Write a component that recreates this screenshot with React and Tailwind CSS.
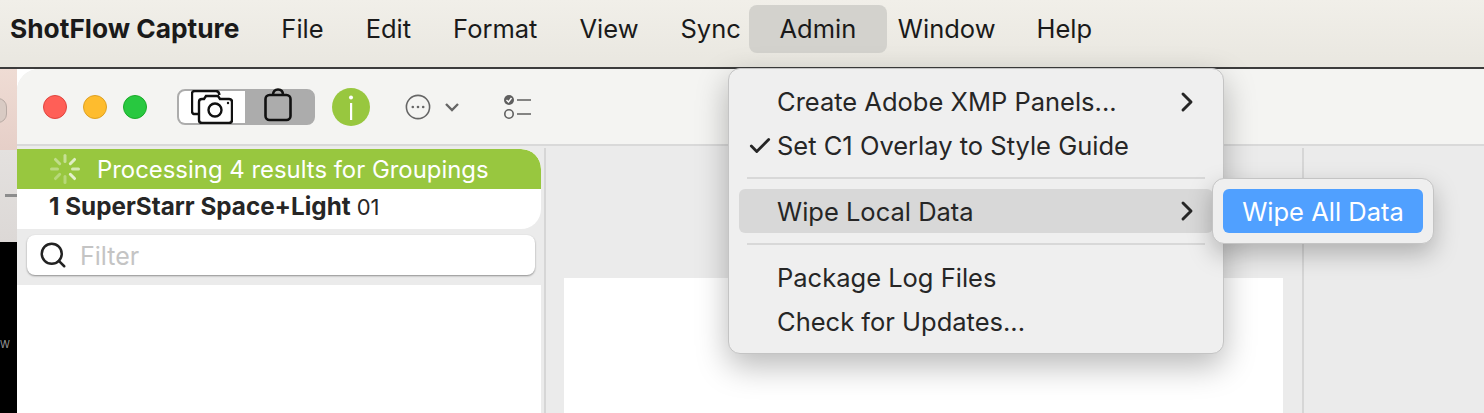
import React from 'react';
import { ChevronRight, Check, Search } from 'lucide-react';

const font = { fontFamily: 'Inter' };

function CameraIcon() {
  return (
    <svg width="42" height="34" viewBox="0 0 42 34" fill="none" stroke="#111" strokeWidth="2.4" className="absolute left-[12px] top-[-1px]">
      <path d="M7 24 H4 C2 24 1 23 1 21 V4 C1 2 2 1 4 1 H25 C27 1 28 2 28.5 5" />
      <path d="M8 12 C8 10 9 9 11 9 H13 L15 6 H27 L29 9 H38 C40 9 41 10 41 12 V30 C41 32 40 33 38 33 H11 C9 33 8 32 8 30 Z" />
      <circle cx="24" cy="20" r="6.5" />
      <circle cx="37" cy="13" r="1.2" fill="#111" stroke="none" />
    </svg>
  );
}

function BagIcon() {
  return (
    <svg width="28" height="34" viewBox="0 0 28 34" fill="none" stroke="#111" strokeWidth="2.6">
      <rect x="1.5" y="7" width="25" height="25" rx="4" />
      <path d="M9 7 C9 3.5 11 1.5 14 1.5 C17 1.5 19 3.5 19 7" />
    </svg>
  );
}

function InfoIcon() {
  return (
    <svg width="38" height="38" viewBox="0 0 38 38">
      <circle cx="19" cy="19" r="19" fill="#98c73f" />
      <circle cx="19" cy="9.5" r="2" fill="#fff" />
      <rect x="18" y="15" width="2.2" height="17" fill="#fff" />
    </svg>
  );
}

function Spinner() {
  const spokes = [
    [0, 0.45], [45, 0.7], [90, 0.6], [135, 0.75], [180, 0.3], [225, 0.3], [270, 0.35], [315, 0.4],
  ];
  return (
    <svg width="32" height="32" viewBox="0 0 32 32">
      {spokes.map(([deg, o]) => (
        <rect key={deg} x="14.5" y="1" width="3" height="9" rx="1.5" fill="#fff" opacity={o} transform={`rotate(${deg} 16 16)`} />
      ))}
    </svg>
  );
}

function TaskIcon() {
  return (
    <svg width="30" height="24" viewBox="0 0 30 24" fill="none">
      <circle cx="6" cy="5" r="5" fill="#5f5f5f" />
      <path d="M3.5 5 L5.5 7 L8.5 3" stroke="#fff" strokeWidth="1.4" />
      <circle cx="6" cy="19" r="4.2" stroke="#5f5f5f" strokeWidth="1.6" />
      <path d="M14 5 H28 M14 19 H28" stroke="#5f5f5f" strokeWidth="1.6" />
    </svg>
  );
}

function MoreIcon() {
  return (
    <svg width="26" height="26" viewBox="0 0 26 26" fill="none">
      <circle cx="13" cy="13" r="11.6" stroke="#666" strokeWidth="1.6" />
      <circle cx="7.8" cy="13" r="1.3" fill="#666" />
      <circle cx="13" cy="13" r="1.3" fill="#666" />
      <circle cx="18.2" cy="13" r="1.3" fill="#666" />
    </svg>
  );
}

function MenuItem({ children, checked, arrow, active }) {
  return (
    <div className={`flex h-11 items-center rounded-md pl-[38px] pr-[10px] text-[25.5px] text-[#262626] ${active ? 'bg-[#d8d8d8]' : ''}`}>
      <span className={`relative flex-1 leading-none ${active ? 'pt-[2px]' : ''}`}>
        {checked && <Check size={26} strokeWidth={2.6} className="absolute left-[-30px] top-0 text-[#262626]" />}
        {children}
      </span>
      {arrow && <ChevronRight size={32} strokeWidth={2.2} className="text-[#262626]" />}
    </div>
  );
}

export default function App() {
  const menus = ['File', 'Edit', 'Format', 'View', 'Sync'];

  return (
    <div className="relative flex h-[413px] w-[1484px] flex-col overflow-hidden bg-white" style={font}>
      {/* Menu bar */}
      <div className="flex h-[69px] shrink-0 items-start border-b-2 border-[#3c3c3c] bg-gradient-to-b from-[#f1efe9] to-[#e9e7e0] pl-[10px] pt-[5px] text-[25.5px] text-[#1a1a1a]">
        <span className="mr-[42px] flex h-12 items-center text-[26.3px] font-bold">ShotFlow Capture</span>
        {menus.map((m) => (
          <span key={m} className={`flex h-12 items-center ${m === 'Sync' ? 'mr-[8px]' : 'mr-[42px]'}`}>{m}</span>
        ))}
        <span className="flex h-12 w-[138px] items-center justify-center rounded-lg bg-[#d3d2cd]">Admin</span>
        <span className="ml-[11px] flex h-12 items-center">Window</span>
        <span className="ml-[41px] flex h-12 items-center">Help</span>
      </div>

      <div className="flex min-h-0 flex-1">
        {/* Desktop behind the window */}
        <div className="relative flex w-[17px] shrink-0 flex-col overflow-hidden">
          <div className="h-[81px] bg-gradient-to-b from-[#efdcd4] to-[#e6cfc8]" />
          <div className="h-[92px] bg-gradient-to-b from-[#e4e1df] to-[#dcd8d6]" />
          <div className="flex-1 bg-black pt-[97px] text-[10px] leading-none text-[#999]">W</div>
          <div className="absolute left-[-11px] top-[29px] h-[25px] w-[18px] rounded-full border border-[#b8aaa4] bg-[#d9cbc4]" />
          <div className="absolute left-[5px] top-[125px] h-[3px] w-[12px] bg-[#8d8d8d]" />
        </div>

        {/* App window */}
        <div className="flex min-w-0 flex-1 flex-col overflow-hidden rounded-tl-[22px] bg-[#ebebeb]">
          <div className="flex h-[77px] shrink-0 items-center border-b-2 border-[#d9d9d9] bg-[#f4f4f2] pl-[26px]">
            <span className="h-6 w-6 rounded-full border border-[#e0443e] bg-[#ff5f57]" />
            <span className="ml-[16px] h-6 w-6 rounded-full border border-[#dea123] bg-[#febc2e]" />
            <span className="ml-[16px] h-6 w-6 rounded-full border border-[#1aab29] bg-[#28c840]" />
            <div className="relative ml-[30px] flex h-9 w-[138px] rounded-lg border-2 border-[#acacac] bg-[#acacac]">
              <div className="w-[66px] rounded-l-md bg-white"><CameraIcon /></div>
              <div className="flex flex-1 items-center justify-center pb-[3px] pr-[3px]"><BagIcon /></div>
            </div>
            <span className="ml-[17px]"><InfoIcon /></span>
            <span className="ml-[35px]"><MoreIcon /></span>
            <svg width="16" height="10" viewBox="0 0 16 10" fill="none" className="ml-[13px]">
              <path d="M2 2 L8 8 L14 2" stroke="#666" strokeWidth="2.4" />
            </svg>
            <span className="ml-[43px]"><TaskIcon /></span>
          </div>

          <div className="flex min-h-0 flex-1">
            {/* Sidebar */}
            <div className="flex w-[524px] shrink-0 flex-col">
              <div className="mt-[3px] overflow-hidden rounded-tr-[20px] rounded-br-[20px] bg-white">
                <div className="flex h-10 items-center rounded-tr-[20px] bg-[#98c73f] pl-[32px] text-[23.9px] text-white">
                  <Spinner />
                  <span className="ml-[16px] pt-[1px]">Processing 4 results for Groupings</span>
                </div>
                <div className="flex h-10 items-center pb-[4px] pl-[32px] text-[24.25px] text-[#262626]">
                  <span className="font-bold">1 SuperStarr Space+Light</span>
                  <span className="ml-[6px] text-[22px]">01</span>
                </div>
              </div>
              <div className="ml-[10px] mr-[6px] mt-[6px] flex h-10 items-center rounded-lg bg-white pl-[11px] shadow-[0_1px_2px_rgba(0,0,0,0.4)]">
                <Search size={30} strokeWidth={2} className="text-[#222]" />
                <span className="ml-[12px] pt-[3px] text-[25px] text-[#c4c4c4]">Filter</span>
              </div>
              <div className="mt-[10px] flex-1 bg-white" />
            </div>

            {/* Divider */}
            <div className="ml-[3px] mt-[2px] w-[2px] shrink-0 bg-[#d6d6d6]" />

            {/* Center canvas */}
            <div className="flex w-[756px] shrink-0 flex-col pl-[18px] pt-[132px]">
              <div className="w-[719px] flex-1 bg-white" />
            </div>

            <div className="mt-[2px] w-[2px] shrink-0 bg-[#d6d6d6]" />
            <div className="flex-1" />
          </div>
        </div>
      </div>

      {/* Admin menu */}
      <div className="absolute left-[728px] top-[68px] w-[496px] rounded-xl border border-[#c4c4c4] bg-[#efefef] px-[10px] pb-[9px] pt-[11px] shadow-[0_12px_32px_rgba(0,0,0,0.28)]">
        <MenuItem arrow>Create Adobe XMP Panels...</MenuItem>
        <MenuItem checked>Set C1 Overlay to Style Guide</MenuItem>
        <div className="mx-[8px] mb-[10px] mt-[9px] h-[2px] bg-[#d8d8d8]" />
        <MenuItem arrow active>Wipe Local Data</MenuItem>
        <div className="mx-[8px] mb-[11px] mt-[10px] h-[2px] bg-[#d8d8d8]" />
        <MenuItem>Package Log Files</MenuItem>
        <MenuItem>Check for Updates...</MenuItem>
      </div>

      {/* Submenu */}
      <div className="absolute left-[1212px] top-[178px] w-[222px] rounded-xl border border-[#c4c4c4] bg-[#efefef] p-[10px] shadow-[0_10px_24px_rgba(0,0,0,0.25)]">
        <div className="flex h-11 items-center justify-center rounded-md bg-[#50a0ff] pt-[3px] text-[25.5px] text-white">Wipe All Data</div>
      </div>
    </div>
  );
}
